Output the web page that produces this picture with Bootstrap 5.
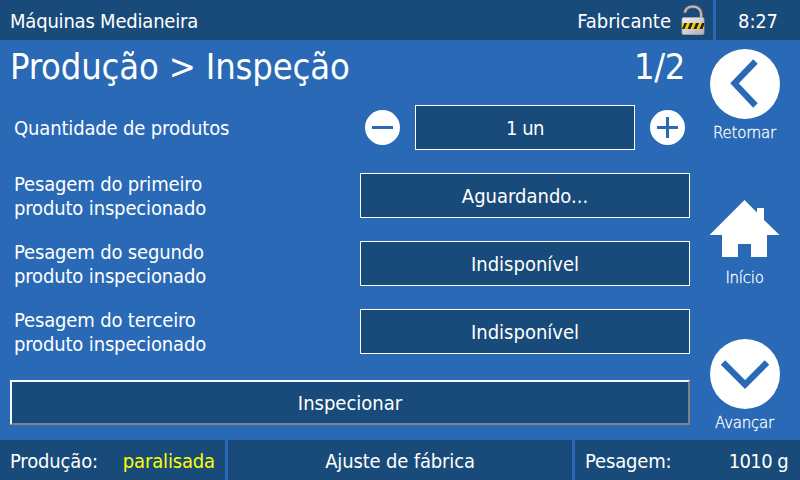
<!DOCTYPE html>
<html lang="pt-BR">
<head>
<meta charset="utf-8">
<meta name="viewport" content="width=device-width, initial-scale=1">
<title>Produção &gt; Inspeção</title>
<link href="https://cdn.jsdelivr.net/npm/bootstrap@5.3.0/dist/css/bootstrap.min.css" rel="stylesheet">
<style>
  :root { --panel: #184a7a; --field: #2969b6; }
  body { width: 800px; height: 480px; overflow: hidden; background: var(--field); color: #fff;
    font-family: "DejaVu Sans Condensed", "DejaVu Sans", sans-serif; font-stretch: condensed;
    font-size: 20px; line-height: 24px; letter-spacing: -.15px; white-space: nowrap; }
  .bar { height: 40px; gap: 3px; flex: none; }
  .bar > div { background: var(--panel); padding: 2px 10px 0; }
  .bar > .top-left { padding: 0 8px 0 10px; }
  .brand { padding-top: 2px; letter-spacing: -.2px; }
  .user { padding-top: 2px; margin-right: 10px; letter-spacing: 0; }
  .clock { width: 84px; }
  .content { height: 400px; flex: none; }
  .main-pane { width: 700px; padding: 0 10px; }
  .heading { height: 65px; font-size: 36px; line-height: 53px; letter-spacing: -.15px; font-weight: 400; }
  .page-no { padding-right: 5px; letter-spacing: -.4px; }
  .field-row { height: 45px; margin-bottom: 23px; padding-left: 4px; }
  .field-box { width: 330px; height: 45px; border: 1px solid #fff; background: var(--panel); letter-spacing: 0; }
  .stepper { gap: 15px; padding-right: 5px; }
  .field-qty { width: 220px; letter-spacing: -.5px; }
  .round-btn { width: 35px; height: 35px; }
  .btn-inspect { height: 45px; margin-top: 26px; background: var(--panel); color: #fff; font: inherit; letter-spacing: 0;
    border: 2px solid; border-color: #fff #848284 #848284 #fff; border-radius: 0; padding: 0; }
  .last-row { margin-bottom: 0; }
  .side { width: 100px; padding-left: 9.5px; }
  .side-btn { width: 70px; height: 145px; padding-top: 8px; font-size: 15px; line-height: 20px; color: #fff;
    font-family: "DejaVu Sans Light", "DejaVu Sans ExtraLight", "DejaVu Sans Condensed", sans-serif; font-weight: 200; }
  .side-btn svg { width: 71px; height: 71px; margin-bottom: 4px; }
  .side-btn span { letter-spacing: -.25px; -webkit-text-stroke: .3px #fff; }
  .st-prod, .st-peso { width: 225px; }
  .bar > .st-peso { padding-right: 12px; }
  .weight { letter-spacing: -.6px; }
  .warn { color: #ff0; }
  svg { display: block; flex: none; }
</style>
</head>
<body class="d-flex flex-column">
<header class="bar d-flex">
  <div class="top-left flex-grow-1 d-flex align-items-center justify-content-between">
    <span class="brand">Máquinas Medianeira</span>
    <span class="d-flex align-items-center"><span class="user">Fabricante</span>
      <svg width="24" height="32" viewBox="0 0 24 32">
        <defs><linearGradient id="steel" x2="1" y2="1"><stop stop-color="#f2f2f2"/><stop offset="1" stop-color="#b0aeb4"/></linearGradient></defs>
        <path d="M4 9C4 4.500 8 2.500 12 2.500C17.500 2.500 20.300 6 20.300 10V15" fill="none" stroke="#77716f" stroke-width="3.400"/>
        <path d="M4 8.500C4.500 4.500 8 2.600 12 2.600C17 2.600 20 6 20 10V15" fill="none" stroke="#c4c0bd" stroke-width="1.800"/>
        <rect x="1" y="13.500" width="22" height="17" rx="1.500" fill="url(#steel)" stroke="#aaa9ad" stroke-width=".8"/>
        <path d="M1 19H23V25H1Z" fill="#f5cc10"/>
        <path d="M3.500 19H6L3.500 25H1ZM9 19H12L9.500 25H6.500ZM15 19H18L15.500 25H12.500ZM21 19H23V21L21.500 25H18.500Z" fill="#25221d"/>
      </svg></span>
  </div>
  <div class="clock d-flex align-items-center justify-content-center"><span>8:27</span></div>
</header>

<div class="content d-flex">
  <main class="main-pane">
    <h1 class="heading d-flex justify-content-between m-0"><span>Produção &gt; Inspeção</span><span class="page-no">1/2</span></h1>
    <div class="field-row d-flex align-items-center justify-content-between">
      <span>Quantidade de produtos</span>
      <div class="stepper d-flex align-items-center">
        <svg class="round-btn" viewBox="0 0 35 35"><circle cx="17.500" cy="17.500" r="17.500" fill="#fff"/><path d="M7 16H28V19H7Z" fill="#2969b6"/></svg>
        <div class="field-box field-qty d-flex align-items-center justify-content-center"><span>1 un</span></div>
        <svg class="round-btn" viewBox="0 0 35 35"><circle cx="17.500" cy="17.500" r="17.500" fill="#fff"/><path d="M7 16H16V7H19V16H28V19H19V28H16V19H7Z" fill="#2969b6"/></svg>
      </div>
    </div>
    <div class="field-row d-flex align-items-center justify-content-between">
      <span>Pesagem do primeiro<br>produto inspecionado</span>
      <div class="field-box d-flex align-items-center justify-content-center"><span>Aguardando...</span></div>
    </div>
    <div class="field-row d-flex align-items-center justify-content-between">
      <span>Pesagem do segundo<br>produto inspecionado</span>
      <div class="field-box d-flex align-items-center justify-content-center"><span>Indisponível</span></div>
    </div>
    <div class="field-row last-row d-flex align-items-center justify-content-between">
      <span>Pesagem do terceiro<br>produto inspecionado</span>
      <div class="field-box d-flex align-items-center justify-content-center"><span>Indisponível</span></div>
    </div>
    <button class="btn btn-inspect w-100">Inspecionar</button>
  </main>
  <nav class="side">
    <div class="side-btn d-flex flex-column align-items-center">
      <svg viewBox="0 0 71 71"><circle cx="36" cy="36" r="35" fill="#fff"/><path d="M46.500 13.500L25.500 35.300L46.500 57.500" fill="none" stroke="#2969b6" stroke-width="6.200"/></svg>
      <span>Retornar</span>
    </div>
    <div class="side-btn d-flex flex-column align-items-center">
      <svg viewBox="0 0 71 71"><path d="M35.500 7L48 19.500V15H55V27L70.500 42H58V64H42V51H29V64H13V42H.5Z" fill="#fff"/></svg>
      <span>Início</span>
    </div>
    <div class="side-btn d-flex flex-column align-items-center">
      <svg viewBox="0 0 71 71"><circle cx="36" cy="36" r="35" fill="#fff"/><path d="M14 24.500L36 46.500L58 24.500" fill="none" stroke="#2969b6" stroke-width="6.200"/></svg>
      <span>Avançar</span>
    </div>
  </nav>
</div>

<footer class="bar d-flex">
  <div class="st-prod d-flex align-items-center justify-content-between"><span>Produção:</span><span class="warn">paralisada</span></div>
  <div class="flex-grow-1 d-flex align-items-center justify-content-center"><span>Ajuste de fábrica</span></div>
  <div class="st-peso d-flex align-items-center justify-content-between"><span>Pesagem:</span><span class="weight">1010 g</span></div>
</footer>
<script src="https://cdn.jsdelivr.net/npm/bootstrap@5.3.0/dist/js/bootstrap.bundle.min.js"></script>
</body>
</html>
